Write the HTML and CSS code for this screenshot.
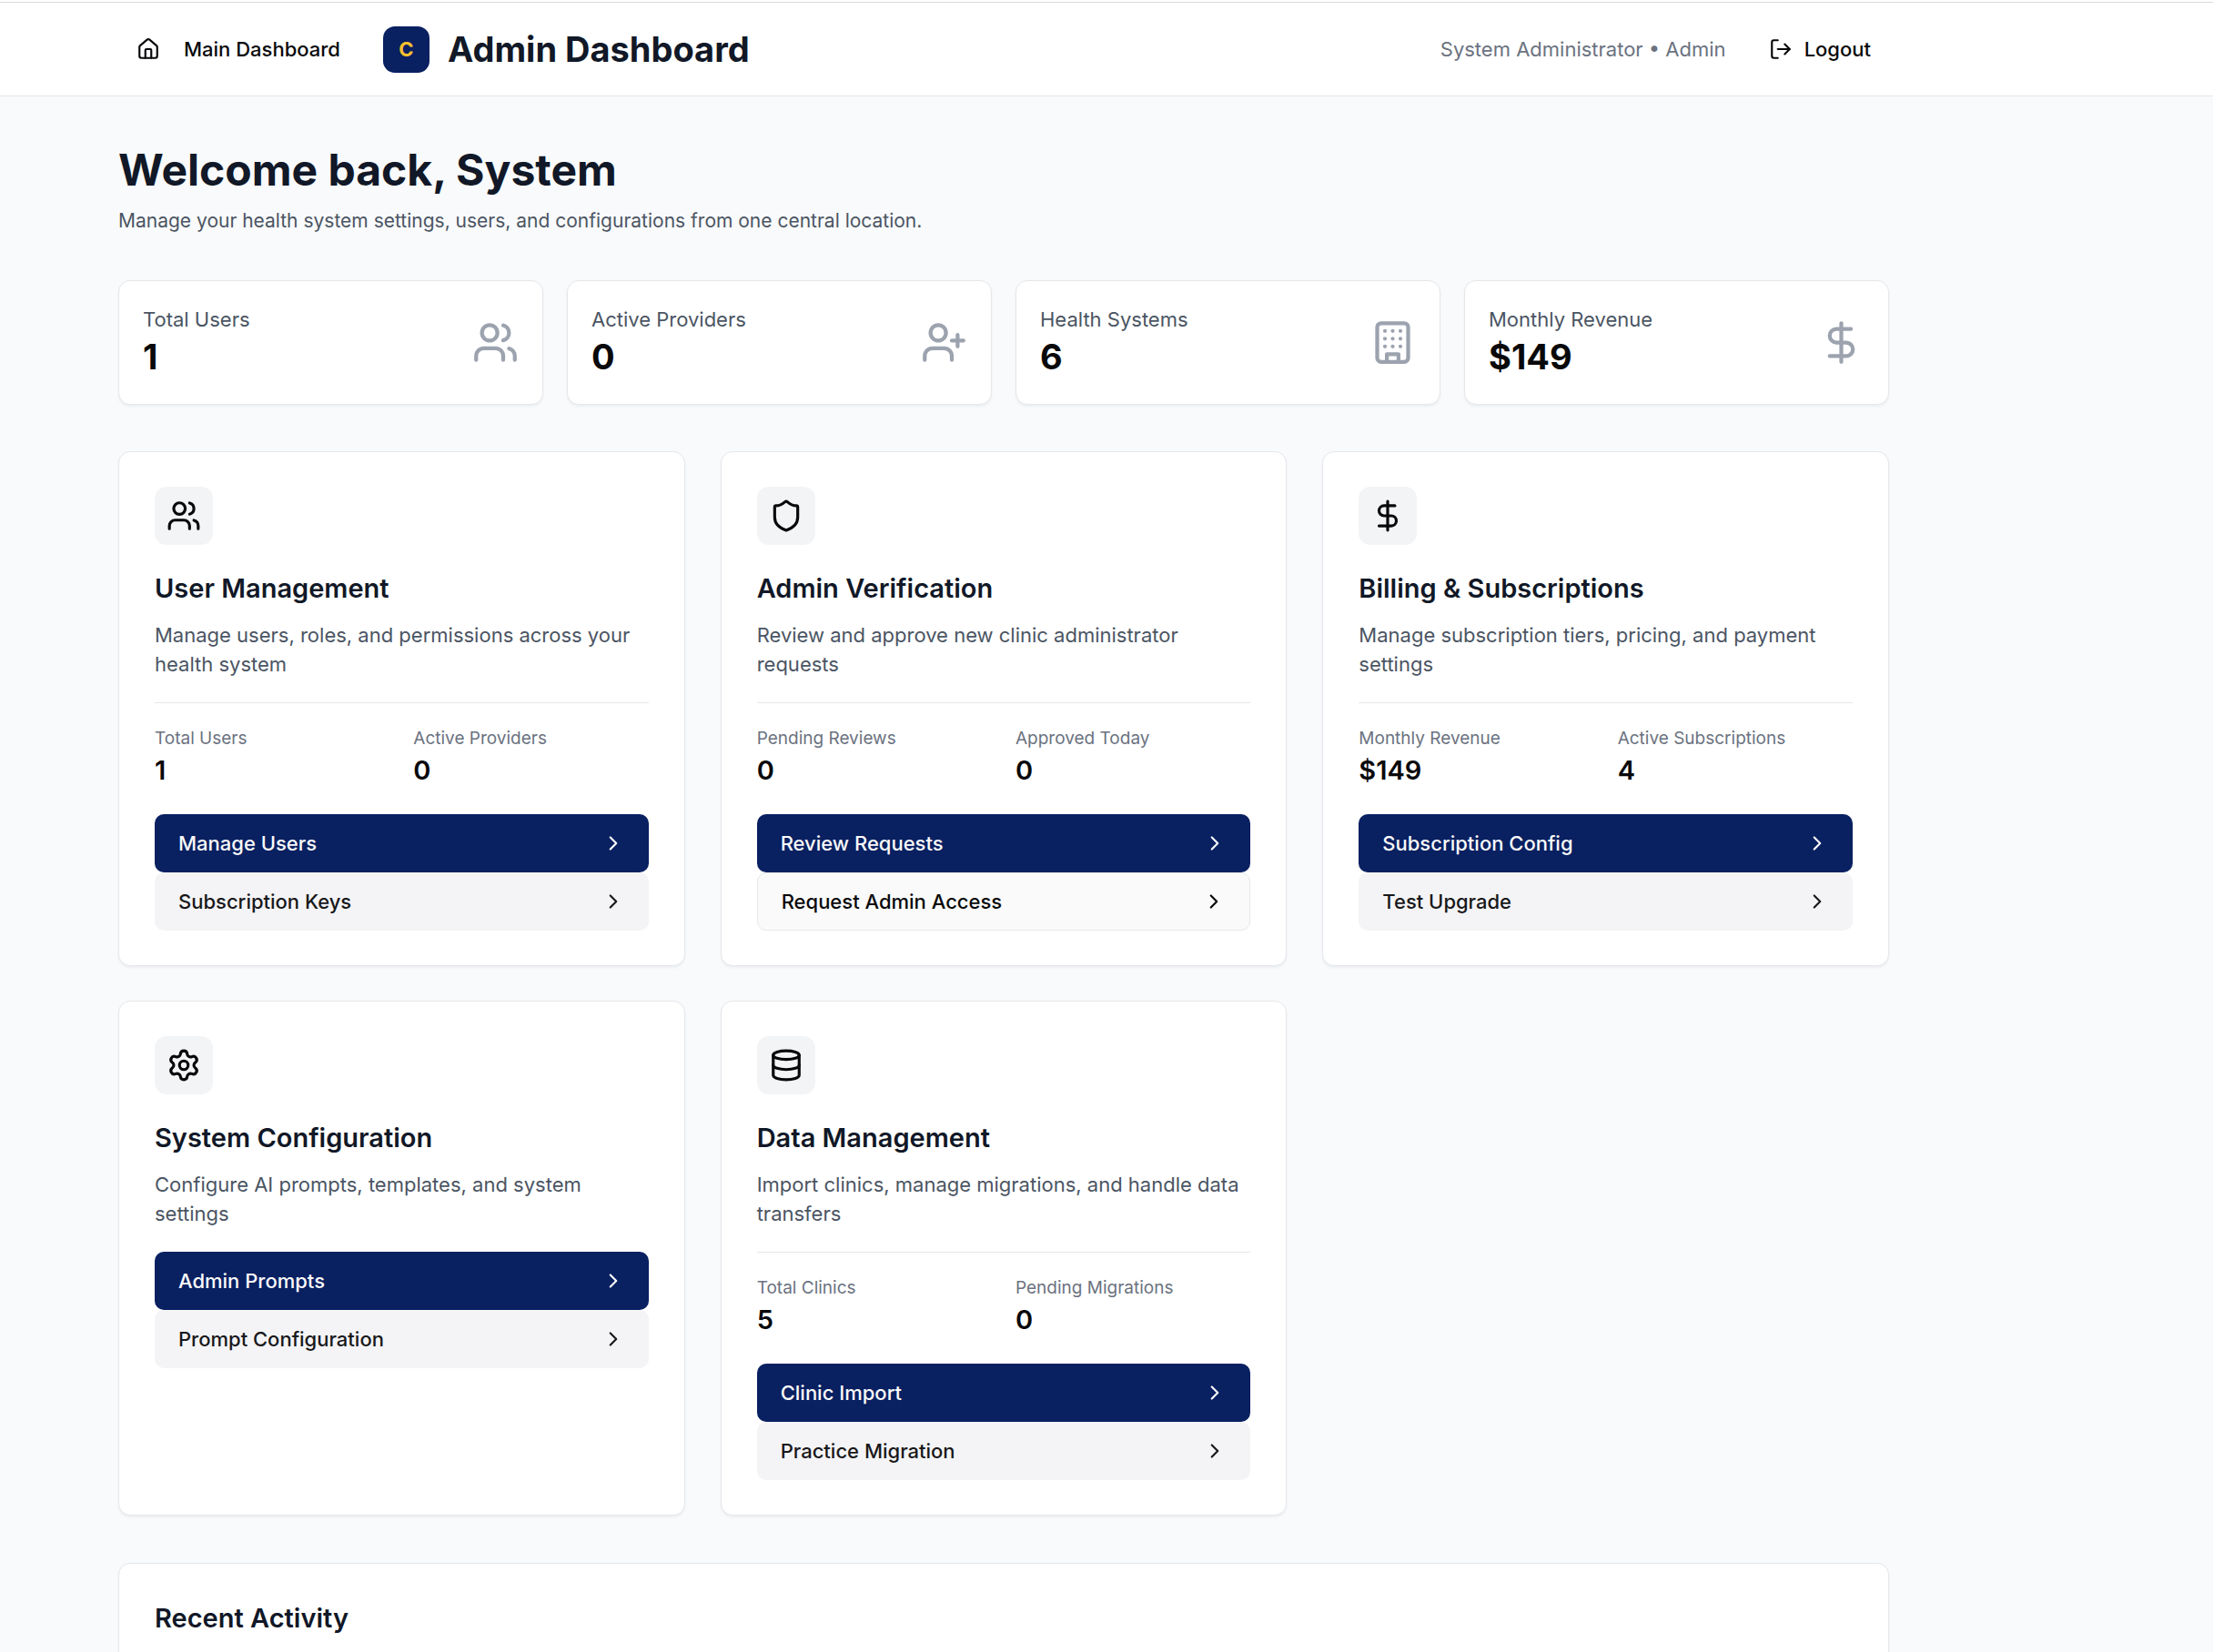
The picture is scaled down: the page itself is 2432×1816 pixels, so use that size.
FILE: index.html
```html
<!DOCTYPE html>
<html lang="en">
<head>
<meta charset="utf-8">
<meta name="viewport" content="width=device-width, initial-scale=1">
<title>Admin Dashboard</title>
<link rel="stylesheet" href="styles.css">
</head>
<body>
<svg class="sprite" aria-hidden="true">
  <symbol id="i-home" viewBox="0 0 24 24"><path d="M15 21v-8a1 1 0 0 0-1-1h-4a1 1 0 0 0-1 1v8"/><path d="M3 10a2 2 0 0 1 .709-1.528l7-5.999a2 2 0 0 1 2.582 0l7 5.999A2 2 0 0 1 21 10v9a2 2 0 0 1-2 2H5a2 2 0 0 1-2-2z"/></symbol>
  <symbol id="i-logout" viewBox="0 0 24 24"><path d="M9 21H5a2 2 0 0 1-2-2V5a2 2 0 0 1 2-2h4"/><path d="m16 17 5-5-5-5"/><path d="M21 12H9"/></symbol>
  <symbol id="i-users" viewBox="0 0 24 24"><path d="M16 21v-2a4 4 0 0 0-4-4H6a4 4 0 0 0-4 4v2"/><circle cx="9" cy="7" r="4"/><path d="M22 21v-2a4 4 0 0 0-3-3.87"/><path d="M16 3.13a4 4 0 0 1 0 7.75"/></symbol>
  <symbol id="i-user-plus" viewBox="0 0 24 24"><path d="M16 21v-2a4 4 0 0 0-4-4H6a4 4 0 0 0-4 4v2"/><circle cx="9" cy="7" r="4"/><path d="M19 8v6"/><path d="M22 11h-6"/></symbol>
  <symbol id="i-building" viewBox="0 0 24 24"><rect width="16" height="20" x="4" y="2" rx="2" ry="2"/><path d="M9 22v-4h6v4"/><path d="M8 6h.01M16 6h.01M12 6h.01M12 10h.01M12 14h.01M16 10h.01M16 14h.01M8 10h.01M8 14h.01"/></symbol>
  <symbol id="i-dollar" viewBox="0 0 24 24"><path d="M12 2v20"/><path d="M17 5H9.5a3.5 3.5 0 0 0 0 7h5a3.5 3.5 0 0 1 0 7H6"/></symbol>
  <symbol id="i-shield" viewBox="0 0 24 24"><path d="M20 13c0 5-3.500 7.500-7.660 8.950a1 1 0 0 1-.67-.01C7.500 20.500 4 18 4 13V6a1 1 0 0 1 1-1c2 0 4.500-1.200 6.240-2.720a1.170 1.170 0 0 1 1.520 0C14.510 3.810 17 5 19 5a1 1 0 0 1 1 1z"/></symbol>
  <symbol id="i-settings" viewBox="0 0 24 24"><path d="M9.671 4.136a2.340 2.340 0 0 1 4.659 0 2.340 2.340 0 0 0 3.319 1.915 2.340 2.340 0 0 1 2.330 4.033 2.340 2.340 0 0 0 0 3.831 2.340 2.340 0 0 1-2.330 4.033 2.340 2.340 0 0 0-3.319 1.915 2.340 2.340 0 0 1-4.659 0 2.340 2.340 0 0 0-3.320-1.915 2.340 2.340 0 0 1-2.330-4.033 2.340 2.340 0 0 0 0-3.831A2.340 2.340 0 0 1 6.350 6.051a2.340 2.340 0 0 0 3.319-1.915"/><circle cx="12" cy="12" r="3"/></symbol>
  <symbol id="i-database" viewBox="0 0 24 24"><ellipse cx="12" cy="5" rx="9" ry="3"/><path d="M3 5v14a9 3 0 0 0 18 0V5"/><path d="M3 12a9 3 0 0 0 18 0"/></symbol>
  <symbol id="i-chevron" viewBox="0 0 24 24"><path d="m9 18 6-6-6-6"/></symbol>
</svg>

<div class="page">
  <header class="topbar">
    <div class="container topbar-inner">
      <div class="topbar-group">
        <a class="nav-link nav-home" href="#"><svg class="icon"><use href="#i-home"/></svg>Main Dashboard</a>
        <div class="brand">
          <span class="logo">C</span>
          <span class="brand-name">Admin Dashboard</span>
        </div>
      </div>
      <div class="topbar-group">
        <span class="account">System Administrator • Admin</span>
        <button class="nav-link" type="button"><svg class="icon"><use href="#i-logout"/></svg>Logout</button>
      </div>
    </div>
  </header>

  <main class="container main">
    <h1 class="welcome">Welcome back, System</h1>
    <p class="subtitle">Manage your health system settings, users, and configurations from one central location.</p>

    <section class="stats" aria-label="Overview">
      <div class="card stat"><div><p class="stat-label">Total Users</p><p class="stat-value">1</p></div><svg class="icon stat-icon"><use href="#i-users"/></svg></div>
      <div class="card stat"><div><p class="stat-label">Active Providers</p><p class="stat-value">0</p></div><svg class="icon stat-icon"><use href="#i-user-plus"/></svg></div>
      <div class="card stat"><div><p class="stat-label">Health Systems</p><p class="stat-value">6</p></div><svg class="icon stat-icon"><use href="#i-building"/></svg></div>
      <div class="card stat"><div><p class="stat-label">Monthly Revenue</p><p class="stat-value">$149</p></div><svg class="icon stat-icon"><use href="#i-dollar"/></svg></div>
    </section>

    <section class="modules" aria-label="Administration">
      <article class="card module">
        <div class="module-icon"><svg class="icon"><use href="#i-users"/></svg></div>
        <h2 class="module-title">User Management</h2>
        <p class="module-text">Manage users, roles, and permissions across your health system</p>
        <dl class="figures">
          <div><dt>Total Users</dt><dd>1</dd></div>
          <div><dt>Active Providers</dt><dd>0</dd></div>
        </dl>
        <a class="action action-primary" href="#">Manage Users<svg class="icon"><use href="#i-chevron"/></svg></a>
        <a class="action action-secondary" href="#">Subscription Keys<svg class="icon"><use href="#i-chevron"/></svg></a>
      </article>

      <article class="card module">
        <div class="module-icon"><svg class="icon"><use href="#i-shield"/></svg></div>
        <h2 class="module-title">Admin Verification</h2>
        <p class="module-text">Review and approve new clinic administrator requests</p>
        <dl class="figures">
          <div><dt>Pending Reviews</dt><dd>0</dd></div>
          <div><dt>Approved Today</dt><dd>0</dd></div>
        </dl>
        <a class="action action-primary" href="#">Review Requests<svg class="icon"><use href="#i-chevron"/></svg></a>
        <a class="action action-outline" href="#">Request Admin Access<svg class="icon"><use href="#i-chevron"/></svg></a>
      </article>

      <article class="card module">
        <div class="module-icon"><svg class="icon"><use href="#i-dollar"/></svg></div>
        <h2 class="module-title">Billing &amp; Subscriptions</h2>
        <p class="module-text">Manage subscription tiers, pricing, and payment settings</p>
        <dl class="figures">
          <div><dt>Monthly Revenue</dt><dd>$149</dd></div>
          <div><dt>Active Subscriptions</dt><dd>4</dd></div>
        </dl>
        <a class="action action-primary" href="#">Subscription Config<svg class="icon"><use href="#i-chevron"/></svg></a>
        <a class="action action-secondary" href="#">Test Upgrade<svg class="icon"><use href="#i-chevron"/></svg></a>
      </article>

      <article class="card module">
        <div class="module-icon"><svg class="icon"><use href="#i-settings"/></svg></div>
        <h2 class="module-title">System Configuration</h2>
        <p class="module-text">Configure AI prompts, templates, and system settings</p>
        <a class="action action-primary" href="#">Admin Prompts<svg class="icon"><use href="#i-chevron"/></svg></a>
        <a class="action action-secondary" href="#">Prompt Configuration<svg class="icon"><use href="#i-chevron"/></svg></a>
      </article>

      <article class="card module">
        <div class="module-icon"><svg class="icon"><use href="#i-database"/></svg></div>
        <h2 class="module-title">Data Management</h2>
        <p class="module-text">Import clinics, manage migrations, and handle data transfers</p>
        <dl class="figures">
          <div><dt>Total Clinics</dt><dd>5</dd></div>
          <div><dt>Pending Migrations</dt><dd>0</dd></div>
        </dl>
        <a class="action action-primary" href="#">Clinic Import<svg class="icon"><use href="#i-chevron"/></svg></a>
        <a class="action action-secondary" href="#">Practice Migration<svg class="icon"><use href="#i-chevron"/></svg></a>
      </article>
    </section>

    <section class="card activity">
      <h2 class="activity-title">Recent Activity</h2>
    </section>
  </main>
</div>
</body>
</html>
```
FILE: styles.css
```css
:root {
  --ink: #09090b;
  --heading: #111827;
  --text: #4b5563;
  --muted: #6b7280;
  --faint: #9ca3af;
  --line: #e5e7eb;
  --surface: #f3f4f6;
  --navy: #092061;
  --gold: #fbc02d;
}

* { box-sizing: border-box; }

body {
  margin: 0;
  background: #f9fafb;
  color: var(--ink);
  font: 400 22px/32px Inter, "Liberation Sans", sans-serif;
}

h1, h2, p, dl, dd { margin: 0; }

.sprite { display: none; }

.icon {
  display: block;
  flex: none;
  width: 26px;
  height: 26px;
  fill: none;
  stroke: currentColor;
  stroke-width: 2;
  stroke-linecap: round;
  stroke-linejoin: round;
}

/* The page scrolls inside the window */
.page {
  height: 100vh;
  overflow-y: auto;
  scrollbar-width: none;
  background: linear-gradient(#fff 2px, transparent 2px);
}

.container {
  max-width: 2048px;
  margin-left: 79px;
  padding: 0 51px;
}

/* Top bar */
.topbar {
  margin-top: 2px;
  border-top: 1px solid #d9dadc;
  border-bottom: 1px solid var(--line);
  background: #fff;
}

.topbar-inner,
.topbar-group,
.brand,
.nav-link { display: flex; align-items: center; }

.topbar-inner { justify-content: space-between; min-height: 102px; }
.topbar-group { gap: 27px; }
.brand { gap: 20px; }

.nav-link {
  gap: 13px;
  padding: 12px 20px;
  border: 0;
  background: none;
  color: var(--ink);
  font: inherit;
  font-weight: 500;
  text-decoration: none;
}

.nav-home { gap: 26px; }

.logo {
  display: grid;
  place-items: center;
  width: 51px;
  height: 51px;
  border-radius: 13px;
  background: var(--navy);
  color: var(--gold);
  font-weight: 700;
}

.brand-name {
  color: var(--heading);
  font-size: 38px;
  font-weight: 700;
  line-height: 51px;
}

.account { color: var(--muted); }

/* Main column */
.main { padding-top: 52px; padding-bottom: 52px; }

.welcome {
  color: var(--heading);
  font-size: 48px;
  font-weight: 700;
  line-height: 58px;
}

.subtitle {
  margin: 11px 0 49px;
  color: var(--text);
  font-size: 21px;
}

.card {
  border: 1px solid var(--line);
  border-radius: 13px;
  background: #fff;
  box-shadow: 0 2px 3px rgba(0, 0, 0, 0.05);
}

.stats {
  display: grid;
  grid-template-columns: repeat(4, 1fr);
  gap: 26px;
  margin-bottom: 51px;
}

.stat {
  display: flex;
  align-items: center;
  justify-content: space-between;
  padding: 26px;
}

.stat-label { color: var(--text); }

.stat-value {
  font-size: 38px;
  font-weight: 700;
  line-height: 51px;
}

.stat-icon { width: 51px; height: 51px; color: var(--faint); }

.modules {
  display: grid;
  grid-template-columns: repeat(3, 1fr);
  gap: 38px 39px;
  margin-bottom: 52px;
}

.module { padding: 38px 39px; }

.module-icon {
  display: grid;
  place-items: center;
  width: 64px;
  height: 64px;
  margin-bottom: 26px;
  border-radius: 13px;
  background: var(--surface);
}

.module-icon .icon { width: 38px; height: 38px; }

.module-title,
.activity-title {
  color: var(--heading);
  font-size: 29px;
  font-weight: 600;
  line-height: 44px;
}

.module-text { margin: 13px 0 26px; color: var(--text); }

.figures {
  display: grid;
  grid-template-columns: 1fr 1fr;
  gap: 26px;
  margin-bottom: 26px;
  padding-top: 26px;
  border-top: 1px solid var(--line);
}

.figures dt { color: var(--muted); font-size: 19px; line-height: 26px; }
.figures dd { font-size: 29px; font-weight: 600; line-height: 44px; }

.action {
  display: flex;
  align-items: center;
  justify-content: space-between;
  min-height: 64px;
  padding: 0 26px;
  border-radius: 10px;
  font-weight: 500;
  text-decoration: none;
}

.action-primary { background: var(--navy); color: #fafafa; }
.action-secondary { background: #f4f4f6; color: #18181b; }
.action-outline { border: 1px solid var(--line); background: #fafafa; color: var(--ink); }

.activity { padding: 38px 39px; }

@media (max-width: 1500px) {
  .container { margin-left: 0; }
  .stats, .modules { grid-template-columns: repeat(2, 1fr); }
}

@media (max-width: 900px) {
  .container { padding-left: 20px; padding-right: 20px; }
  .topbar-inner { flex-wrap: wrap; }
  .stats, .modules { grid-template-columns: 1fr; }
}
```
